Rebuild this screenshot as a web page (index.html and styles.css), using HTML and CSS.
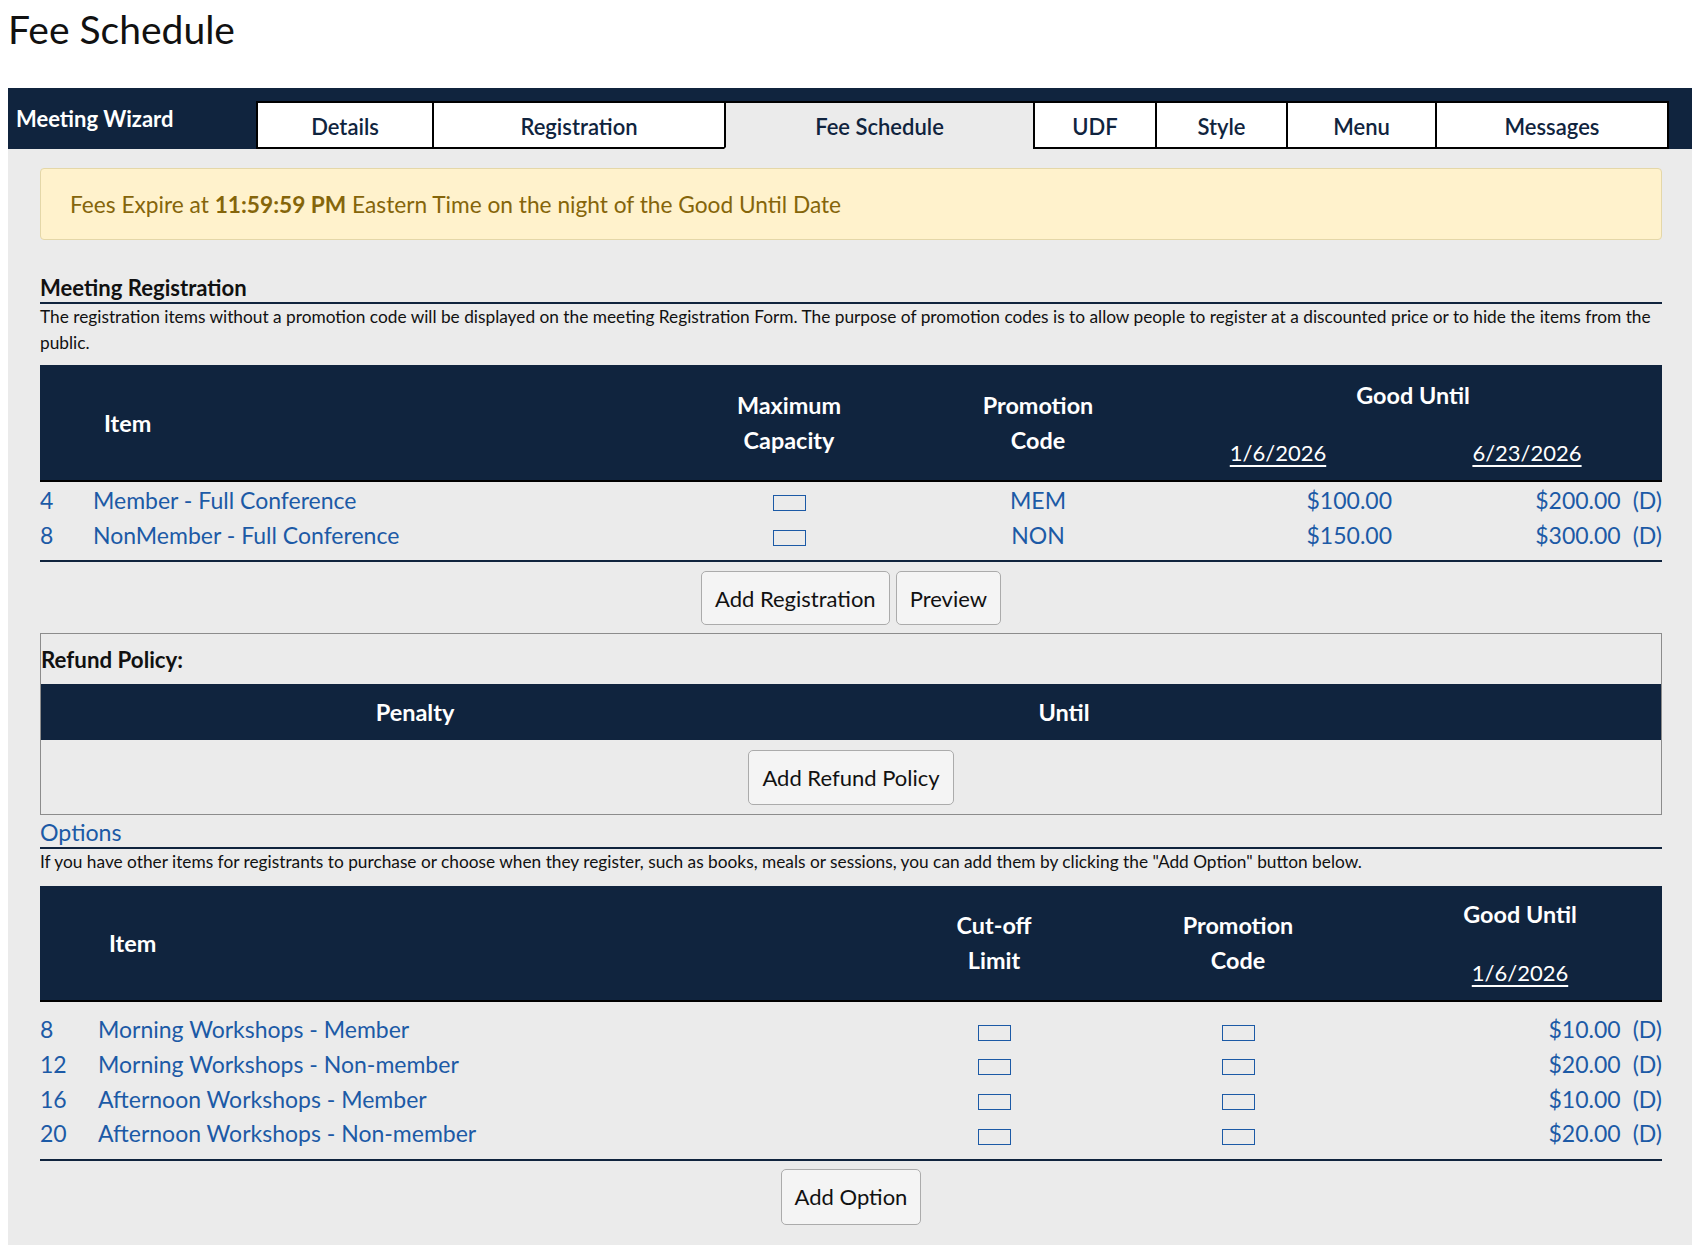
FILE: index.html
```html
<!DOCTYPE html>
<html lang="en">
<head>
<meta charset="utf-8">
<title>Fee Schedule</title>
<link rel="stylesheet" href="styles.css">
</head>
<body>
<h1 class="page-title">Fee Schedule</h1>
<div class="wizard">
  <div class="wizard-bar">
    <div class="wizard-name">Meeting Wizard</div>
    <nav class="tabs">
      <a class="tab tab-details">Details</a>
      <a class="tab tab-registration">Registration</a>
      <a class="tab tab-fee active">Fee Schedule</a>
      <a class="tab tab-udf">UDF</a>
      <a class="tab tab-style">Style</a>
      <a class="tab tab-menu">Menu</a>
      <a class="tab tab-messages">Messages</a>
    </nav>
  </div>
  <div class="wizard-body">
    <div class="alert">Fees Expire at&nbsp;<b>11:59:59 PM</b>&nbsp;Eastern Time on the night of the Good Until Date</div>

    <h2 class="section-title">Meeting Registration</h2>
    <p class="section-desc">The registration items without a promotion code will be displayed on the meeting Registration Form. The purpose of promotion codes is to allow people to register at a discounted price or to hide the items from the public.</p>

    <div class="fee-table reg-table">
      <div class="thead">
        <div class="th-empty"></div>
        <div class="th-item">Item</div>
        <div class="th-center">Maximum<br>Capacity</div>
        <div class="th-center">Promotion<br>Code</div>
        <div class="th-good">
          <div class="good-label">Good Until</div>
          <div class="dates">
            <a class="date-link">1/6/2026</a>
            <a class="date-link">6/23/2026</a>
          </div>
        </div>
      </div>
      <div class="tbody">
        <div class="tr">
          <span class="num">4</span>
          <span class="name">Member - Full Conference</span>
          <span class="cell-center"><span class="box"></span></span>
          <span class="cell-center">MEM</span>
          <span class="price">$100.00</span>
          <span class="price">$200.00<span class="d">(D)</span></span>
        </div>
        <div class="tr">
          <span class="num">8</span>
          <span class="name">NonMember - Full Conference</span>
          <span class="cell-center"><span class="box"></span></span>
          <span class="cell-center">NON</span>
          <span class="price">$150.00</span>
          <span class="price">$300.00<span class="d">(D)</span></span>
        </div>
      </div>
    </div>
    <div class="actions actions-reg">
      <button class="btn">Add Registration</button>
      <button class="btn">Preview</button>
    </div>

    <div class="refund">
      <div class="refund-title">Refund Policy:</div>
      <div class="refund-head">
        <div>Penalty</div>
        <div>Until</div>
        <div></div>
      </div>
      <div class="refund-actions">
        <button class="btn">Add Refund Policy</button>
      </div>
    </div>

    <div class="options-title">Options</div>
    <p class="section-desc">If you have other items for registrants to purchase or choose when they register, such as books, meals or sessions, you can add them by clicking the "Add Option" button below.</p>

    <div class="fee-table opt-table">
      <div class="thead">
        <div class="th-empty"></div>
        <div class="th-item">Item</div>
        <div class="th-center">Cut-off<br>Limit</div>
        <div class="th-center">Promotion<br>Code</div>
        <div class="th-good">
          <div class="good-label">Good Until</div>
          <div class="dates">
            <a class="date-link">1/6/2026</a>
          </div>
        </div>
      </div>
      <div class="tbody">
        <div class="tr">
          <span class="num">8</span>
          <span class="name">Morning Workshops - Member</span>
          <span class="cell-center"><span class="box"></span></span>
          <span class="cell-center"><span class="box"></span></span>
          <span class="price">$10.00<span class="d">(D)</span></span>
        </div>
        <div class="tr">
          <span class="num">12</span>
          <span class="name">Morning Workshops - Non-member</span>
          <span class="cell-center"><span class="box"></span></span>
          <span class="cell-center"><span class="box"></span></span>
          <span class="price">$20.00<span class="d">(D)</span></span>
        </div>
        <div class="tr">
          <span class="num">16</span>
          <span class="name">Afternoon Workshops - Member</span>
          <span class="cell-center"><span class="box"></span></span>
          <span class="cell-center"><span class="box"></span></span>
          <span class="price">$10.00<span class="d">(D)</span></span>
        </div>
        <div class="tr">
          <span class="num">20</span>
          <span class="name">Afternoon Workshops - Non-member</span>
          <span class="cell-center"><span class="box"></span></span>
          <span class="cell-center"><span class="box"></span></span>
          <span class="price">$20.00<span class="d">(D)</span></span>
        </div>
      </div>
    </div>
    <div class="actions actions-opt">
      <button class="btn btn-tall">Add Option</button>
    </div>
  </div>
</div>
</body>
</html>
```

FILE: styles.css
```css
* { box-sizing: border-box; }
html, body { margin: 0; padding: 0; }
body {
  font-family: Lato, "Open Sans", "Liberation Sans", sans-serif;
  color: #111;
  background: #fff;
}

.page-title {
  margin: 5px 0 0 8px;
  height: 48px;
  font-size: 39px;
  line-height: 48px;
  font-weight: 400;
}

.wizard { margin: 35px 0 0 8px; }

.wizard-bar {
  display: flex;
  height: 61px;
  background: #10243e;
}
.wizard-name {
  width: 248px;
  padding-left: 8px;
  display: flex;
  align-items: center;
  color: #fff;
  font-size: 22px;
  font-weight: 700;
}
.tabs {
  display: flex;
  align-self: flex-end;
  height: 48px;
}
.tab {
  display: flex;
  align-items: center;
  justify-content: center;
  background: #fff;
  border: 2px solid #000;
  border-right: none;
  color: #10243e;
  font-size: 22px;
  font-weight: 600;
  padding-top: 2px;
}
.tab:last-child { border-right: 2px solid #000; }
.tab.active { background: #ebebeb; border-bottom-color: #ebebeb; }
.tab-details { width: 176px; }
.tab-registration { width: 292px; }
.tab-fee { width: 309px; }
.tab-udf { width: 122px; }
.tab-style { width: 131px; }
.tab-menu { width: 149px; }
.tab-messages { width: 234px; }

.wizard-body {
  background: #ebebeb;
  padding: 19px 30px 30px 32px;
}

.alert {
  height: 72px;
  display: flex;
  align-items: center;
  padding-left: 29px;
  background: #fff2cc;
  border: 1px solid #e4d7a8;
  border-radius: 4px;
  color: #85650a;
  font-size: 22.7px;
}
.alert b { font-weight: 700; }

.section-title {
  margin: 34px 0 0;
  font-size: 22.1px;
  line-height: 28px;
  font-weight: 700;
  color: #111;
  border-bottom: 2px solid #10243e;
}
.section-desc {
  margin: 0;
  font-size: 17.3px;
  line-height: 26px;
  color: #111;
}

.fee-table { margin-top: 9px; }
.opt-table { margin-top: 11px; }
.thead {
  display: grid;
  align-items: center;
  background: #10243e;
  color: #fff;
  font-size: 23.4px;
  font-weight: 700;
  border-bottom: 2px solid #000;
}
.reg-table .thead { height: 117px; }
.opt-table .thead { height: 116px; }
.reg-table .thead, .reg-table .tr {
  grid-template-columns: 53px 573px 246px 252px 228px 270px;
}
.opt-table .thead, .opt-table .tr {
  grid-template-columns: 58px 776px 240px 248px 300px;
}
.th-item { padding-left: 11px; }
.th-center { text-align: center; line-height: 35px; }
.th-good {
  grid-column: span 2;
  display: flex;
  flex-direction: column;
  gap: 22px;
  text-align: center;
  line-height: 35px;
  padding-top: 2px;
}
.opt-table .th-good { grid-column: span 1; gap: 23px; padding-top: 0; padding-left: 16px; }
.dates {
  display: grid;
  grid-template-columns: 228px 270px;
  font-size: 22px;
}
.opt-table .dates { grid-template-columns: 1fr; }
.date-link {
  color: #fff;
  font-weight: 400;
  text-decoration: underline;
  text-underline-offset: 4px;
}

.tbody {
  border-bottom: 2px solid #10243e;
}
.reg-table .tbody { padding: 0 0 8px; }
.opt-table .tbody { padding: 10px 0 8px; }
.tr {
  display: grid;
  align-items: center;
  height: 35px;
  color: #1c5aa6;
  font-size: 23px;
}
.opt-table .tr { height: 34.7px; }
.cell-center { text-align: center; }
.price { text-align: right; }
.d { margin-left: 12px; }
.box {
  display: inline-block;
  width: 33px;
  height: 16px;
  border: 1px solid #1c5aa6;
  vertical-align: middle;
}

.actions {
  display: flex;
  justify-content: center;
  gap: 6px;
}
.actions-reg { margin-top: 9px; }
.actions-opt { margin-top: 8px; }
.btn {
  height: 54px;
  padding: 0 13px;
  font-family: Lato, "Open Sans", "Liberation Sans", sans-serif;
  font-size: 22px;
  color: #111;
  background: #f4f4f4;
  border: 1px solid #ababab;
  border-radius: 5px;
}
.btn-tall { height: 56px; }

.refund {
  margin-top: 8px;
  border: 1px solid #8c8c8c;
}
.refund-title {
  height: 50px;
  display: flex;
  align-items: center;
  font-size: 22.3px;
  font-weight: 700;
}
.refund-head {
  display: grid;
  grid-template-columns: 748px 550px 1fr;
  align-items: center;
  height: 56px;
  background: #10243e;
  color: #fff;
  font-size: 23.5px;
  font-weight: 700;
  text-align: center;
}
.refund-actions {
  display: flex;
  justify-content: center;
  padding: 10px 0 9px;
}
.refund-actions .btn { height: 55px; }

.options-title {
  margin-top: 2px;
  line-height: 30px;
  font-size: 23.2px;
  color: #1c5aa6;
  border-bottom: 2px solid #10243e;
}
```
